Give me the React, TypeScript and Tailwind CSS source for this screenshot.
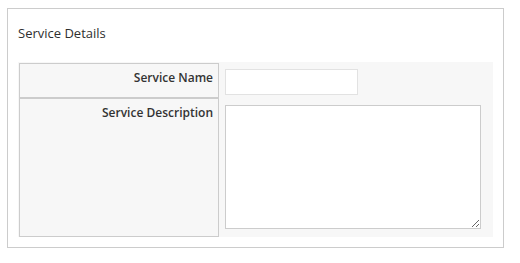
export default function App() {
  return (
    <div
      className="w-[520px] h-[263px] bg-white pt-2 pl-[7px] text-[#333]"
      style={{ fontFamily: '"Open Sans", "Liberation Sans", sans-serif' }}
    >
      <div className="w-[497px] h-[240px] border border-[#cccccc] px-[10px] pt-[15px]">
        <h2 className="text-[13px] leading-[18px] font-medium text-[#2f2f2f]">Service Details</h2>

        <div className="mt-[20px] w-[475px] h-[175px] bg-[#f7f7f7] p-px">
          <div className="grid grid-cols-[200px_1fr] grid-rows-[35px_139px]">
            <div className="border border-[#cccccc] text-right pr-[5px] pt-[5px] text-[12px] leading-[18px] font-semibold">
              Service Name
            </div>
            <div className="pl-[6px] pt-[6px]">
              <input
                type="text"
                className="block w-[133px] h-[26px] bg-white border border-[#e2e2e2] outline-none"
              />
            </div>

            <div className="border border-[#cccccc] text-right pr-[5px] pt-[5px] text-[12px] leading-[18px] font-semibold">
              Service Description
            </div>
            <div className="pl-[6px] pt-[7px]">
              <textarea className="block w-[256px] h-[124px] bg-white border border-[#cccccc] outline-none resize" />
            </div>
          </div>
        </div>
      </div>
    </div>
  );
}
